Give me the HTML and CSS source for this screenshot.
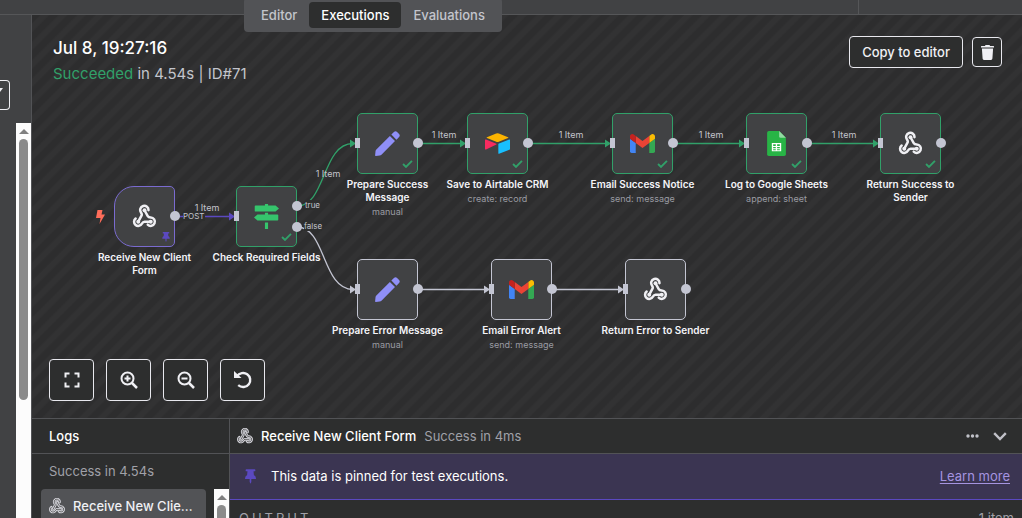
FILE: index.html
```
<!DOCTYPE html>
<html lang="en">
<head>
<meta charset="utf-8">
<title>Workflow executions</title>
<link rel="stylesheet" href="styles.css">
</head>
<body>
<svg class="defs" width="0" height="0" aria-hidden="true">
  <symbol id="webhook" viewBox="0 0 24 24">
    <g fill="none" stroke="currentColor" stroke-width="2.400" stroke-linecap="round">
      <path d="M18 17h-6c-1.100 0-1.950.94-2.480 1.900A4 4 0 1 1 3.500 13.900"/>
      <path d="m6 17 3.130-5.780c.53-.97.1-2.180-.5-3.100a4 4 0 1 1 7.200-2.100"/>
      <path d="m12 6 3.130 5.730C15.660 12.700 16.900 13 18 13a4 4 0 1 1-2.900 6.800"/>
    </g>
    <g fill="currentColor"><circle cx="6" cy="17" r="1.900"/><circle cx="12" cy="6" r="1.900"/><circle cx="18" cy="17" r="1.900"/></g>
  </symbol>
  <symbol id="webhook-outline" viewBox="0 0 24 24">
    <g fill="none" stroke-linecap="round">
      <g stroke="currentColor" stroke-width="4">
        <path d="M18 17h-6c-1.100 0-1.950.94-2.480 1.900A4 4 0 1 1 3.500 13.900"/>
        <path d="m6 17 3.130-5.780c.53-.97.1-2.180-.5-3.100a4 4 0 1 1 7.200-2.100"/>
        <path d="m12 6 3.130 5.730C15.660 12.700 16.900 13 18 13a4 4 0 1 1-2.900 6.800"/>
      </g>
      <g stroke="#2d2e2e" stroke-width="1">
        <path d="M18 17h-6c-1.100 0-1.950.94-2.480 1.900A4 4 0 1 1 3.500 13.900"/>
        <path d="m6 17 3.130-5.780c.53-.97.1-2.180-.5-3.100a4 4 0 1 1 7.200-2.100"/>
        <path d="m12 6 3.130 5.730C15.660 12.700 16.900 13 18 13a4 4 0 1 1-2.900 6.800"/>
      </g>
    </g>
  </symbol>
  <symbol id="pencil" viewBox="0 0 24 24">
    <path fill="#8f8ff7" d="M14.300 4.800 19.200 9.700 6.200 22.700Q5.500 23.400 4.500 23.500L0.800 23.900Q0 24 .1 23.200L.5 19.500Q.6 18.500 1.300 17.800ZM15.700 3.400 18.200.9Q19.700-.4 21.200.9L23.100 2.800Q24.400 4.300 23.100 5.800L20.600 8.300Z"/>
  </symbol>
  <symbol id="gmail" viewBox="0 0 24 18">
    <path fill="#4285f4" d="M1.600 18H5.500V8.500L0 4.400V16.400Q0 18 1.600 18Z"/>
    <path fill="#34a853" d="M18.500 18H22.400Q24 18 24 16.400V4.400L18.500 8.500Z"/>
    <path fill="#fbbc04" d="M18.500 1.700V8.500L24 4.400V2.200C24 .2 21.600-.8 20.100.5Z"/>
    <path fill="#ea4335" d="M5.500 8.500V1.700L12 6.600 18.500 1.700V8.500L12 13.400Z"/>
    <path fill="#c5221f" d="M0 2.200V4.400L5.500 8.500V1.700L3.900.5C2.300-.7 0 .2 0 2.200Z"/>
  </symbol>
  <symbol id="airtable" viewBox="0 0 24 20">
    <path fill="#fcb400" d="M10.700.3 1.900 3.900Q1 4.400 1.900 4.800L10.800 8.300Q12 8.800 13.200 8.300L22.100 4.800Q23 4.400 22.100 3.900L13.300.3Q12-.2 10.700.3Z"/>
    <path fill="#18bfff" d="M12.800 10.600V19.400Q12.800 20.100 13.500 19.900L23.400 16Q24 15.800 24 15.200V6.600Q24 6 23.300 6.200L13.400 10Q12.800 10.200 12.800 10.600Z"/>
    <path fill="#f82b60" d="M0 6.700V15Q0 16.200 1 15.700L10.900 11Q11.500 10.600 10.800 10.200L1 6.200Q0 5.900 0 6.700Z"/>
  </symbol>
  <symbol id="sheets" viewBox="0 0 18 24">
    <path fill="#28b446" d="M1.600 0H11.500L18 6.500V22.400Q18 24 16.400 24H1.600Q0 24 0 22.400V1.600Q0 0 1.600 0Z"/>
    <path fill="#92d9a2" d="M11.500 0 18 6.500H13Q11.500 6.500 11.500 5Z"/>
    <path fill="#fff" fill-rule="evenodd" d="M4.500 11.500h9v8h-9ZM5.800 12.800v1.500h2.500v-1.500ZM9.600 12.800v1.500h2.600v-1.500ZM5.800 15.300v1.200h2.500v-1.200ZM9.600 15.300v1.200h2.600v-1.200ZM5.800 17.500v1h2.500v-1ZM9.600 17.500v1h2.600v-1Z"/>
  </symbol>
  <symbol id="signs" viewBox="0 0 24 24">
    <path fill="#35c46c" d="M10.500 0h3v1.500h7.200L24 4.300l-3.300 2.900H1.500Q.7 7.200.7 6.400V2.300q0-.8.800-.8h9ZM10.500 8.500h3v1.600h9q.8 0 .8.800v4.100q0 .8-.8.8H3.300L0 13l3.300-2.900h7.200ZM10.500 17.800h3V24h-3Z"/>
  </symbol>
  <symbol id="pin" viewBox="0 0 12 16">
    <path fill="currentColor" d="M1.500 0h9q.8 0 .8.800v.8q0 .8-.8.8H9.300l.4 4Q12 7.700 12 10.200q0 .6-.7.600H6.900V14L6 16l-.9-2v-3.200H.7Q0 10.800 0 10.200 0 7.700 2.300 6.400l.4-4H1.500Q.7 2.400.7 1.600V.8Q.7 0 1.500 0Z"/>
  </symbol>
  <symbol id="check" viewBox="0 0 12 9">
    <path d="m1 4.500 3.300 3.200L11 1" fill="none" stroke="currentColor" stroke-width="2.200"/>
  </symbol>
</svg>

<header class="topbar">
  <div class="topbar-side"></div>
  <nav class="tabs" aria-label="Workflow views">
    <button class="tab">Editor</button>
    <button class="tab active">Executions</button>
    <button class="tab">Evaluations</button>
  </nav>
</header>

<div class="workspace">
  <aside class="sidebar">
    <button class="filter" aria-label="Filter"><svg width="3" height="4" viewBox="0 0 3 4"><path d="M0 0h3L0 4Z" fill="currentColor"/></svg></button>
    <div class="scrollbar"><i class="scroll-up"></i><i class="thumb thumb-long"></i></div>
  </aside>

  <main class="main">
    <section class="canvas">
      <div class="summary">
        <div class="summary-text">
          <h1>Jul 8, 19:27:16</h1>
          <p><span class="ok">Succeeded</span> in 4.54s | ID#71</p>
        </div>
        <div class="actions">
          <button class="outline copy">Copy to editor</button>
          <button class="outline trash" aria-label="Delete execution">
            <svg width="13" height="15" viewBox="0 0 13 15"><path fill="currentColor" d="M4.500 0h4l.6 1H12.500q.5 0 .5.500V2.600H0V1.500Q0 1 .5 1H4ZM.9 3.600H12.100L11.400 13.600Q11.300 15 10 15H3Q1.700 15 1.600 13.600Z"/></svg>
          </button>
        </div>
      </div>

      <svg class="edges" aria-hidden="true">
        <g fill="none" stroke-width="1.300">
          <g stroke="#31a069">
            <path d="M265 191C294 191 290 128.500 321 128.500"/>
            <path d="M386 128.500H430M496 128.500H575M641 128.500H709M775 128.500H843"/>
          </g>
          <path stroke="#5b49c0" d="M143 201.500H199"/>
          <path stroke="#c3c5d2" d="M265 212C294 212 290 274.500 321 274.500M386 274.500H454M520 274.500H588"/>
        </g>
        <path fill="#31a069" d="M318 124.500l6 4-6 4ZM428 124.500l6 4-6 4ZM573 124.500l6 4-6 4ZM707 124.500l6 4-6 4ZM841 124.500l6 4-6 4Z"/>
        <path fill="#5b49c0" d="M197 197.500l6 4-6 4Z"/>
        <path fill="#c3c5d2" d="M318 270.500l6 4-6 4ZM452 270.500l6 4-6 4ZM586 270.500l6 4-6 4Z"/>
      </svg>
      <span class="edge-label e1">1 Item</span>
      <span class="edge-label e2">1 Item</span>
      <span class="edge-label e3">1 Item</span>
      <span class="edge-label e4">1 Item</span>
      <span class="edge-label e5">1 Item</span>
      <span class="edge-label e6">1 Item</span>
      <span class="port-label post">POST</span>
      <span class="port-label true">true</span>
      <span class="port-label false">false</span>
      <svg class="bolt" width="9" height="14" viewBox="0 0 9 14"><path fill="#ff6d5a" d="M1.500 0H6.500L5.500 4.500H9L3.500 14 4.500 8H0Z"/></svg>

      <article class="node trigger n-receive">
        <div class="box"><svg class="icon"><use href="#webhook"/></svg><svg class="pinned"><use href="#pin"/></svg><i class="out"></i></div>
        <h2>Receive New Client<br>Form</h2>
      </article>
      <article class="node success n-check">
        <div class="box"><i class="in"></i><svg class="icon"><use href="#signs"/></svg><svg class="tick"><use href="#check"/></svg><i class="out out-true"></i><i class="out out-false"></i></div>
        <h2>Check Required Fields</h2>
      </article>
      <article class="node success n-prepare">
        <div class="box"><i class="in"></i><svg class="icon"><use href="#pencil"/></svg><svg class="tick"><use href="#check"/></svg><i class="out"></i></div>
        <h2>Prepare Success<br>Message</h2><p>manual</p>
      </article>
      <article class="node success n-save">
        <div class="box"><i class="in"></i><svg class="icon"><use href="#airtable"/></svg><svg class="tick"><use href="#check"/></svg><i class="out"></i></div>
        <h2>Save to Airtable CRM</h2><p>create: record</p>
      </article>
      <article class="node success n-notice">
        <div class="box"><i class="in"></i><svg class="icon"><use href="#gmail"/></svg><svg class="tick"><use href="#check"/></svg><i class="out"></i></div>
        <h2>Email Success Notice</h2><p>send: message</p>
      </article>
      <article class="node success n-log">
        <div class="box"><i class="in"></i><svg class="icon"><use href="#sheets"/></svg><svg class="tick"><use href="#check"/></svg><i class="out"></i></div>
        <h2>Log to Google Sheets</h2><p>append: sheet</p>
      </article>
      <article class="node success n-return">
        <div class="box"><i class="in"></i><svg class="icon"><use href="#webhook"/></svg><svg class="tick"><use href="#check"/></svg><i class="out"></i></div>
        <h2>Return Success to<br>Sender</h2>
      </article>
      <article class="node n-prepare-error">
        <div class="box"><i class="in"></i><svg class="icon"><use href="#pencil"/></svg><i class="out"></i></div>
        <h2>Prepare Error Message</h2><p>manual</p>
      </article>
      <article class="node n-alert">
        <div class="box"><i class="in"></i><svg class="icon"><use href="#gmail"/></svg><i class="out"></i></div>
        <h2>Email Error Alert</h2><p>send: message</p>
      </article>
      <article class="node n-return-error">
        <div class="box"><i class="in"></i><svg class="icon"><use href="#webhook"/></svg><i class="out"></i></div>
        <h2>Return Error to Sender</h2>
      </article>

      <div class="controls">
        <button class="outline control" aria-label="Fit view"><svg width="16" height="16" viewBox="0 0 16 16"><path d="M1.500 5.500v-4h4M10.500 1.500h4v4M14.500 10.500v4h-4M5.500 14.500h-4v-4" fill="none" stroke="currentColor" stroke-width="2"/></svg></button>
        <button class="outline control" aria-label="Zoom in"><svg width="18" height="18" viewBox="0 0 18 18"><g fill="none" stroke="currentColor" stroke-width="2"><circle cx="7.500" cy="7.500" r="6"/><path d="m12 12 5 5" stroke-width="2.500"/><path d="M4.500 7.500h6M7.500 4.500v6"/></g></svg></button>
        <button class="outline control" aria-label="Zoom out"><svg width="18" height="18" viewBox="0 0 18 18"><g fill="none" stroke="currentColor" stroke-width="2"><circle cx="7.500" cy="7.500" r="6"/><path d="m12 12 5 5" stroke-width="2.500"/><path d="M4.500 7.500h6"/></g></svg></button>
        <button class="outline control" aria-label="Reset zoom"><svg width="18" height="18" viewBox="0 0 18 18"><path d="M0 0 7.500 7H0Z" fill="currentColor"/><path d="M2.500 5.500C5.500 1.800 10 1 13.200 3.300 16.500 5.700 17.200 10 14.800 13.200 12.300 16.600 7.500 17 4.200 14.200" fill="none" stroke="currentColor" stroke-width="2.400"/></svg></button>
      </div>
    </section>

    <section class="panel">
      <div class="logs">
        <header class="panel-head logs-head"><h2>Logs</h2></header>
        <p class="muted logs-status">Success in 4.54s</p>
        <div class="logs-list">
          <button class="log-item"><svg class="small-icon log-icon"><use href="#webhook-outline"/></svg><span>Receive New Client Form</span></button>
          <div class="scrollbar"><i class="scroll-up"></i><i class="thumb"></i></div>
        </div>
      </div>
      <div class="details">
        <header class="panel-head details-head">
          <svg class="small-icon"><use href="#webhook-outline"/></svg>
          <h2>Receive New Client Form</h2>
          <span class="muted">Success in 4ms</span>
          <span class="tools">
            <button aria-label="More"><svg width="13" height="4" viewBox="0 0 13 4"><g fill="currentColor"><circle cx="2" cy="2" r="1.700"/><circle cx="6.500" cy="2" r="1.700"/><circle cx="11" cy="2" r="1.700"/></g></svg></button>
            <button aria-label="Collapse"><svg width="14" height="9" viewBox="0 0 14 9"><path d="m1.200 1.200 5.800 5.800 5.800-5.800" fill="none" stroke="currentColor" stroke-width="2.400"/></svg></button>
          </span>
        </header>
        <div class="banner">
          <svg class="banner-pin"><use href="#pin"/></svg>
          <span>This data is pinned for test executions.</span>
          <a href="#learn">Learn more</a>
        </div>
        <div class="output"><span class="output-title">OUTPUT</span><span>1 item</span></div>
      </div>
    </section>
  </main>
</div>
</body>
</html>
```
FILE: styles.css
```
* { box-sizing: border-box; }
body {
  margin: 0;
  height: 100vh;
  display: flex;
  flex-direction: column;
  overflow: hidden;
  background: #2d2e2e;
  color: #f0f0f4;
  font-family: Inter, "Liberation Sans", sans-serif;
  font-size: 13px;
}
h1, h2, p { margin: 0; }
button {
  margin: 0;
  padding: 0;
  border: 0;
  background: none;
  color: inherit;
  font: inherit;
}
svg { display: block; }
.defs { position: absolute; }

.topbar {
  position: relative;
  z-index: 2;
  flex: none;
  display: flex;
  justify-content: flex-end;
  height: 15px;
  background: #414244;
  border-bottom: 1px solid #555658;
}
.topbar-side { width: 164px; border-left: 1px solid #555658; }
.tabs {
  position: absolute;
  left: 244px;
  bottom: -18px;
  display: flex;
  padding: 4px 5px;
  border-radius: 4px;
  background: #525356;
}
.tab {
  height: 26px;
  padding: 0 12px;
  border-radius: 4px;
  color: #c3c5cc;
  font-weight: 500;
  line-height: 24px;
}
.tab.active { background: #2d2e2e; color: #fff; }

.workspace { flex: 1; display: flex; min-height: 0; }
.sidebar {
  flex: none;
  width: 32px;
  display: flex;
  flex-direction: column;
  padding-top: 65px;
  background: #414244;
  border-right: 1px solid #525356;
}
.filter {
  flex: none;
  display: flex;
  width: 10px;
  height: 30px;
  padding-top: 7px;
  margin-bottom: 13px;
  border: 1px solid #f0f0f4;
  border-left: 0;
  border-radius: 0 4px 4px 0;
}
.scrollbar {
  display: flex;
  flex-direction: column;
  align-items: center;
  gap: 5px;
  width: 15px;
  padding-top: 6px;
  background: #fcfcfc;
}
.sidebar .scrollbar { flex: 1; align-self: flex-end; }
.scroll-up {
  border: 5px solid transparent;
  border-top: 0;
  border-bottom-color: #7f7f7f;
}
.thumb { flex: 1; width: 9px; border-radius: 5px 5px 0 0; background: #8b8b8b; }
.thumb-long { flex: none; height: 67%; border-radius: 5px; }

.main { flex: 1; min-width: 0; display: flex; flex-direction: column; }
.canvas {
  position: relative;
  flex: 1;
  display: flex;
  flex-direction: column;
  justify-content: space-between;
  min-height: 0;
  overflow: hidden;
  background: repeating-linear-gradient(135deg, #2d2d2e 0 5px, #323233 7px 11px, #2d2d2e 13px);
}
.summary { display: flex; justify-content: space-between; padding: 21px 20px 0 21px; }
h1 { font-size: 17px; font-weight: 500; line-height: 24px; color: #fff; }
.summary p { margin-top: 2px; font-size: 15px; line-height: 24px; color: #c3c5cc; }
.summary .ok { color: #31a069; }
.actions { display: flex; align-items: center; gap: 9px; height: 32px; }
.outline {
  display: flex;
  align-items: center;
  justify-content: center;
  border: 1px solid #e8e8ee;
  border-radius: 4px;
  background: #2d2e2e;
  font-weight: 500;
}
.copy { height: 32px; padding: 0 12px; }
.trash { width: 30px; height: 30px; }
.controls { display: flex; gap: 12px; padding: 0 0 17px 17px; }
.control { width: 45px; height: 42px; }

.edges { position: absolute; inset: 0; width: 100%; height: 100%; }
.edge-label, .port-label {
  position: absolute;
  font-size: 9px;
  line-height: 10px;
  color: #c3c5cc;
  white-space: nowrap;
}
.edge-label { width: 36px; text-align: center; }
.port-label { background: #2d2e2e; font-size: 8px; }
.e1 { left: 157px; top: 188px; }
.e2 { left: 278px; top: 154px; }
.e3 { left: 394px; top: 115px; }
.e4 { left: 521px; top: 115px; }
.e5 { left: 661px; top: 115px; }
.e6 { left: 794px; top: 115px; }
.post { left: 151px; top: 196px; }
.true { left: 273px; top: 185px; }
.false { left: 272px; top: 206px; }
.bolt { position: absolute; left: 64px; top: 195px; }

.node {
  position: absolute;
  width: 61px;
  display: flex;
  flex-direction: column;
  align-items: center;
  text-align: center;
  white-space: nowrap;
}
.box {
  position: relative;
  display: grid;
  place-items: center;
  width: 61px;
  height: 61px;
  margin-bottom: 4px;
  border: 1px solid #c3c5d2;
  border-radius: 5px;
  background: #414244;
}
.success .box { border-color: #31a069; }
.trigger .box { border-color: #7a6bd0; border-radius: 20px 5px 5px 20px; }
.node h2 { font-size: 10px; font-weight: 600; line-height: 13px; color: #f4f4f8; }
.node p { margin-top: 1px; font-size: 9px; line-height: 13px; color: #9a9ba2; }
.icon { width: 25px; height: 25px; }
.in, .out { position: absolute; background: #c3c5d2; }
.in { left: -3px; top: 24px; width: 5px; height: 10px; }
.out { right: -6px; top: 24px; width: 10px; height: 10px; border-radius: 50%; }
.out-true { top: 14px; }
.out-false { top: 35px; }
.tick { position: absolute; right: 4px; bottom: 5px; width: 11px; height: 8px; color: #31a069; }
.pinned { position: absolute; right: 4px; bottom: 4px; width: 8px; height: 10px; color: #5b49c0; }
.n-receive { left: 82px; top: 171px; }
.n-check { left: 204px; top: 171px; }
.n-prepare { left: 325px; top: 98px; }
.n-save { left: 435px; top: 98px; }
.n-notice { left: 580px; top: 98px; }
.n-log { left: 714px; top: 98px; }
.n-return { left: 848px; top: 98px; }
.n-prepare-error { left: 325px; top: 244px; }
.n-alert { left: 459px; top: 244px; }
.n-return-error { left: 593px; top: 244px; }

.panel {
  flex: none;
  display: flex;
  height: 100px;
  border-top: 1px solid #525356;
  background: #2d2e2e;
}
.logs {
  flex: none;
  width: 198px;
  display: flex;
  flex-direction: column;
  border-right: 1px solid #525356;
}
.details { flex: 1; min-width: 0; display: flex; flex-direction: column; }
.panel-head {
  flex: none;
  display: flex;
  align-items: center;
  height: 35px;
  border-bottom: 1px solid #525356;
}
.panel-head h2 { font-size: 13px; font-weight: 500; color: #fff; }
.logs-head { padding-left: 17px; }
.details-head { gap: 8px; padding: 0 15px 0 7px; }
.muted { color: #a0a1a8; }
.logs-status { padding-left: 17px; line-height: 35px; }
.logs-list { flex: 1; display: flex; justify-content: space-between; padding-left: 9px; min-height: 0; }
.log-item {
  display: flex;
  align-items: center;
  gap: 8px;
  width: 165px;
  height: 34px;
  padding: 0 12px 0 8px;
  border-radius: 4px;
  background: #525356;
  font-weight: 500;
}
.log-item span { overflow: hidden; text-overflow: ellipsis; white-space: nowrap; }
.small-icon { flex: none; width: 16px; height: 16px; overflow: visible; color: #d4d4da; }
.tools { display: flex; align-items: center; gap: 14px; margin-left: auto; color: #c0c1c8; }
.banner {
  flex: none;
  display: flex;
  align-items: center;
  gap: 15px;
  height: 46px;
  padding: 0 12px 1px 15px;
  border-bottom: 1px solid #5b49c0;
  background: #3b3552;
  color: #fff;
}
.banner-pin { width: 11px; height: 15px; color: #5b49c0; }
.banner a { margin-left: auto; color: #a594e0; text-underline-offset: 2px; }
.output {
  display: flex;
  justify-content: space-between;
  padding: 9px 8px 0 9px;
  line-height: 18px;
  color: #a0a1a8;
}
.output-title { letter-spacing: 3px; }
```
